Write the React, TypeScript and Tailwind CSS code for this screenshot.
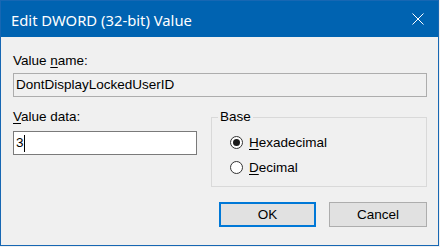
import React from "react";

function Radio({ checked }: { checked?: boolean }) {
  return (
    <span className="w-[13px] h-[13px] rounded-full border border-[#333333] bg-white flex items-center justify-center shrink-0">
      {checked && <span className="w-[7px] h-[7px] rounded-full bg-[#1a1a1a]" />}
    </span>
  );
}

export default function App() {
  return (
    <div className="w-[440px] h-[247px] bg-[#f0f0f0]">
      <div className="w-[439px] h-[246px] border border-[#1767b3] bg-[#f0f0f0] flex flex-col font-['Liberation_Sans',Arial,sans-serif] text-[13.5px] leading-[16px] text-black">
        {/* Title bar */}
        <div className="h-[36px] shrink-0 bg-[#0063b1] flex items-center justify-between pl-[10px] pr-[14px] text-white">
          <span className="font-['Noto_Sans',sans-serif] text-[14.8px] leading-[20px] pt-px">
            Edit DWORD (32-bit) Value
          </span>
          <svg width="12" height="12" viewBox="0 0 12 12">
            <path d="M0.5 0.5 L11.5 11.5 M11.5 0.5 L0.5 11.5" stroke="white" strokeWidth="1" fill="none" />
          </svg>
        </div>

        {/* Body */}
        <div className="flex-1 pl-3 pr-[11px] pt-4">
          <div>
            Value <span className="underline underline-offset-[2px]">n</span>ame:
          </div>
          <div className="mt-1 h-[24px] border border-[#adadad] bg-[#f0f0f0] flex items-center pl-[2px]">
            DontDisplayLockedUserID
          </div>

          <div className="flex mt-3">
            <div className="w-[184px] shrink-0">
              <div>
                <span className="underline underline-offset-[2px]">V</span>alue data:
              </div>
              <div className="mt-[6px] h-[24px] border border-[#7a7a7a] bg-white flex items-center pl-[2px]">
                <span>3</span>
                <span className="inline-block w-px h-[17px] bg-black" />
              </div>
            </div>

            <fieldset className="ml-[14px] flex-1 border border-[#d9d9d9] m-0 p-0">
              <legend className="ml-[6px] px-[2px]">Base</legend>
              <div className="pl-[18px] pt-[5px] pb-[6px]">
                <div className="h-[25px] flex items-center gap-[6px]">
                  <Radio checked />
                  <span>
                    <span className="underline underline-offset-[2px]">H</span>exadecimal
                  </span>
                </div>
                <div className="h-[25px] flex items-center gap-[6px]">
                  <Radio />
                  <span>
                    <span className="underline underline-offset-[2px]">D</span>ecimal
                  </span>
                </div>
              </div>
            </fieldset>
          </div>

          <div className="flex justify-end gap-[13px] mt-[15px]">
            <button className="w-[97px] h-[25px] border-2 border-[#0078d7] bg-[#e1e1e1] flex items-center justify-center">
              OK
            </button>
            <button className="w-[98px] h-[25px] border border-[#adadad] bg-[#e1e1e1] flex items-center justify-center">
              Cancel
            </button>
          </div>
        </div>
      </div>
    </div>
  );
}
